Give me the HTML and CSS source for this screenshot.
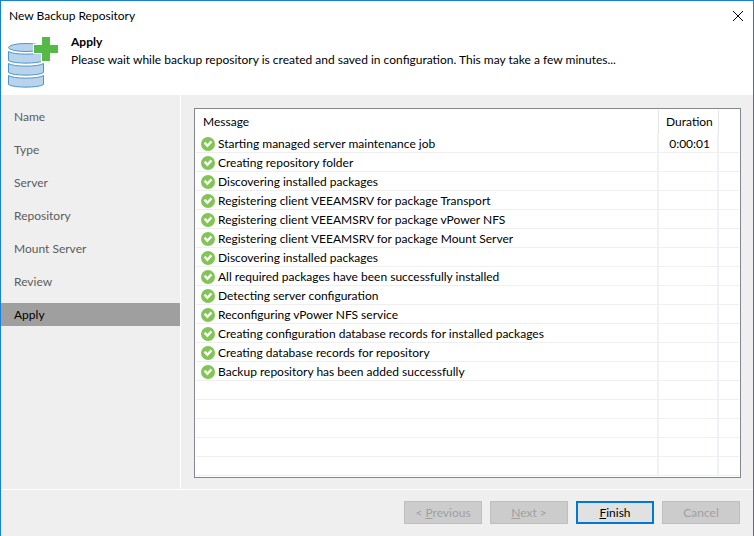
FILE: index.html
```html
<!DOCTYPE html>
<html lang="en">
<head>
    <meta charset="UTF-8">
    <meta name="viewport" content="width=device-width, initial-scale=1.0">
    <title>New Backup Repository</title>
    <link rel="stylesheet" href="styles.css">
</head>
<body>
    <!-- shared symbol for the successful steps -->
    <svg width="0" height="0" class="symbols" aria-hidden="true">
        <symbol id="ok" viewBox="0 0 14 14">
            <circle cx="7" cy="7" r="7" fill="#82c556"/>
            <path d="M3.6 5.6 6.4 8.8 10.4 4.4" fill="none" stroke="#fff" stroke-width="2.4"/>
        </symbol>
    </svg>

    <div class="window">
        <div class="titlebar">
            <span>New Backup Repository</span>
            <button type="button" class="close" aria-label="Close">
                <svg width="12" height="12" viewBox="0 0 12 12">
                    <path d="M1 1 11 11M11 1 1 11" stroke="#000" stroke-width="1"/>
                </svg>
            </button>
        </div>

        <header class="header">
            <svg class="logo" width="52" height="54" viewBox="0 0 52 54">
                <g fill="#bad3ed" stroke="#4a98cb" stroke-width="1">
                    <ellipse cx="19" cy="11.5" rx="17.5" ry="4"/>
                    <path d="M1.5 15.5C6 19 32 19 36.5 15.5V24.5C32 28 6 28 1.5 24.5Z"/>
                    <path d="M1.5 27.5C6 31 32 31 36.5 27.5V36.5C32 40 6 40 1.5 36.5Z"/>
                    <path d="M1.5 39.5C6 43 32 43 36.5 39.5V48.5C32 52 6 52 1.5 48.5Z"/>
                </g>
                <path d="M34 0h10v8h8v10h-8v8H34v-8h-8V8h8z" fill="#fff"/>
                <path d="M35 1h8v8h8v8h-8v8h-8v-8h-8V9h8z" fill="#55b948"/>
            </svg>
            <div>
                <h1>Apply</h1>
                <p>Please wait while backup repository is created and saved in configuration. This may take a few minutes...</p>
            </div>
        </header>

        <div class="main">
            <nav class="steps">
                <a href="#">Name</a>
                <a href="#">Type</a>
                <a href="#">Server</a>
                <a href="#">Repository</a>
                <a href="#">Mount Server</a>
                <a href="#">Review</a>
                <a href="#" class="active">Apply</a>
            </nav>

            <div class="content">
                <div class="log">
                    <table>
                        <thead>
                            <tr><th>Message</th><th class="duration">Duration</th><th class="spare"></th></tr>
                        </thead>
                        <tbody>
                            <tr><td><svg class="ok"><use href="#ok"/></svg>Starting managed server maintenance job</td><td class="duration">0:00:01</td><td></td></tr>
                            <tr><td><svg class="ok"><use href="#ok"/></svg>Creating repository folder</td><td></td><td></td></tr>
                            <tr><td><svg class="ok"><use href="#ok"/></svg>Discovering installed packages</td><td></td><td></td></tr>
                            <tr><td><svg class="ok"><use href="#ok"/></svg>Registering client VEEAMSRV for package Transport</td><td></td><td></td></tr>
                            <tr><td><svg class="ok"><use href="#ok"/></svg>Registering client VEEAMSRV for package vPower NFS</td><td></td><td></td></tr>
                            <tr><td><svg class="ok"><use href="#ok"/></svg>Registering client VEEAMSRV for package Mount Server</td><td></td><td></td></tr>
                            <tr><td><svg class="ok"><use href="#ok"/></svg>Discovering installed packages</td><td></td><td></td></tr>
                            <tr><td><svg class="ok"><use href="#ok"/></svg>All required packages have been successfully installed</td><td></td><td></td></tr>
                            <tr><td><svg class="ok"><use href="#ok"/></svg>Detecting server configuration</td><td></td><td></td></tr>
                            <tr><td><svg class="ok"><use href="#ok"/></svg>Reconfiguring vPower NFS service</td><td></td><td></td></tr>
                            <tr><td><svg class="ok"><use href="#ok"/></svg>Creating configuration database records for installed packages</td><td></td><td></td></tr>
                            <tr><td><svg class="ok"><use href="#ok"/></svg>Creating database records for repository</td><td></td><td></td></tr>
                            <tr><td><svg class="ok"><use href="#ok"/></svg>Backup repository has been added successfully</td><td></td><td></td></tr>
                            <tr><td></td><td></td><td></td></tr>
                            <tr><td></td><td></td><td></td></tr>
                            <tr><td></td><td></td><td></td></tr>
                            <tr><td></td><td></td><td></td></tr>
                            <tr><td></td><td></td><td></td></tr>
                        </tbody>
                    </table>
                </div>
            </div>
        </div>

        <footer class="footer">
            <button type="button" disabled>&lt; <u>P</u>revious</button>
            <button type="button" disabled><u>N</u>ext &gt;</button>
            <button type="button" class="primary"><u>F</u>inish</button>
            <button type="button" disabled>Cancel</button>
        </footer>
    </div>
</body>
</html>
```

FILE: styles.css
```css
* {
    box-sizing: border-box;
}
body {
    margin: 0;
    font-family: "Segoe UI", Lato, "Open Sans", sans-serif;
    font-size: 12px;
    line-height: 18px;
    color: #000;
}
.symbols {
    display: block;
}
.window {
    display: flex;
    flex-direction: column;
    min-height: 100vh;
    background-color: #efefef;
    border: 1px solid #1a80d4;
    border-bottom: none;
}
.titlebar {
    display: flex;
    justify-content: space-between;
    align-items: center;
    height: 29px;
    padding: 0 9px 0 8px;
    background-color: #fff;
}
.close {
    display: flex;
    padding: 0;
    border: none;
    background: none;
}
.header {
    display: flex;
    gap: 12px;
    padding: 3px 6px 5px;
    background-color: #fff;
}
.logo {
    flex: none;
    margin-top: 3px;
}
.header h1 {
    margin: 0;
    font-size: 12px;
    font-weight: bold;
}
.header p {
    margin: 0;
    white-space: nowrap;
}
.main {
    display: flex;
    flex: 1;
}
.steps {
    display: flex;
    flex-direction: column;
    gap: 10px;
    flex: none;
    width: 180px;
    padding-top: 10px;
    border-right: 1px solid #fff;
}
.steps a {
    padding: 3px 13px 2px;
    color: #5c5c5c;
    text-decoration: none;
}
.steps .active {
    background-color: #9f9f9f;
    color: #000;
}
.content {
    display: flex;
    flex: 1;
    padding: 13px 12px 11px 13px;
}
.log {
    flex: 1;
    padding: 1px;
    background-color: #fff;
    border: 1px solid #828790;
}
table {
    width: 100%;
    table-layout: fixed;
    border-collapse: separate;
    border-spacing: 0;
}
th, td {
    padding: 0;
    text-align: left;
    font-weight: normal;
    white-space: nowrap;
}
th {
    height: 24px;
    padding-left: 7px;
    border-right: 1px solid #e5e5e5;
}
td {
    height: 19px;
    padding-top: 2px;
    padding-left: 5px;
    line-height: 16px;
    border-right: 2px solid #edf1f8;
    border-bottom: 1px solid #efefef;
}
th:last-child, td:last-child {
    border-right: none;
}
th.duration {
    width: 60px;
}
td.duration {
    padding-right: 7px;
    text-align: right;
}
.spare {
    width: 20px;
}
.ok {
    width: 14px;
    height: 14px;
    margin-right: 3px;
    vertical-align: -3px;
}
.footer {
    display: flex;
    justify-content: flex-end;
    gap: 8px;
    padding: 11px 13px 12px;
    border-top: 1px solid #fff;
}
.footer button {
    width: 78px;
    height: 23px;
    padding: 0;
    font: inherit;
    line-height: 18px;
    color: #000;
    background-color: #e1e1e1;
    border: 1px solid #adadad;
}
.footer button:disabled {
    color: #a0a0a0;
    background-color: #ccc;
    border-color: #bfbfbf;
}
.footer .primary {
    border: 2px solid #0078d7;
}
```
